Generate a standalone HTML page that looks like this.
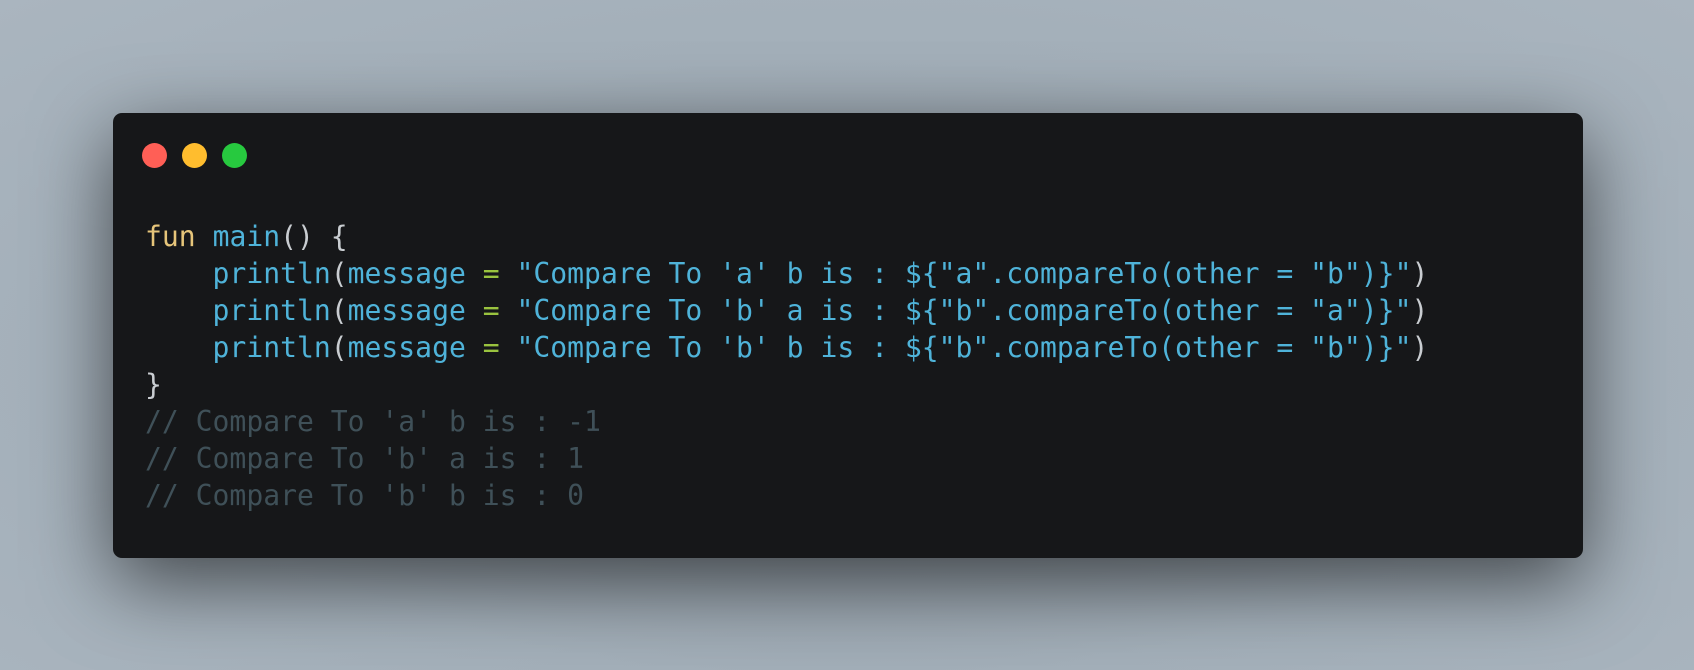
<!DOCTYPE html>
<html><head><style>
html,body{margin:0;padding:0}
body{width:1694px;height:670px;overflow:hidden;background:radial-gradient(ellipse at 50% 55%,#8a949d 0%,#a3afb9 60%,#aab5bf 100%);position:relative}
.win{position:absolute;left:113px;top:113px;width:1470px;height:445px;background:#161719;border-radius:9px;box-shadow:0 24px 80px rgba(0,0,0,0.6)}
.dot{position:absolute;top:143px;width:25px;height:25px;border-radius:50%}
pre{position:absolute;left:145px;top:218px;margin:0;font-family:"DejaVu Sans Mono","Liberation Mono",monospace;font-size:28.05px;line-height:37px;color:#c9cdd1}
.k{color:#e6c57a}.b{color:#4fb3d9}.g{color:#9ac33f}.c{color:#3f5058}
</style></head><body>
<div class="win"></div>
<div class="dot" style="left:142px;background:#ff5f56"></div>
<div class="dot" style="left:182px;background:#ffbd2e"></div>
<div class="dot" style="left:222px;background:#27c93f"></div>
<pre><span class="k">fun</span> <span class="b">main</span>() {
    <span class="b">println</span>(<span class="b">message</span> <span class="g">=</span> <span class="b">"Compare To 'a' b is : ${"a".compareTo(other = "b")}"</span>)
    <span class="b">println</span>(<span class="b">message</span> <span class="g">=</span> <span class="b">"Compare To 'b' a is : ${"b".compareTo(other = "a")}"</span>)
    <span class="b">println</span>(<span class="b">message</span> <span class="g">=</span> <span class="b">"Compare To 'b' b is : ${"b".compareTo(other = "b")}"</span>)
}
<span class="c">// Compare To 'a' b is : -1</span>
<span class="c">// Compare To 'b' a is : 1</span>
<span class="c">// Compare To 'b' b is : 0</span></pre>
</body></html>
